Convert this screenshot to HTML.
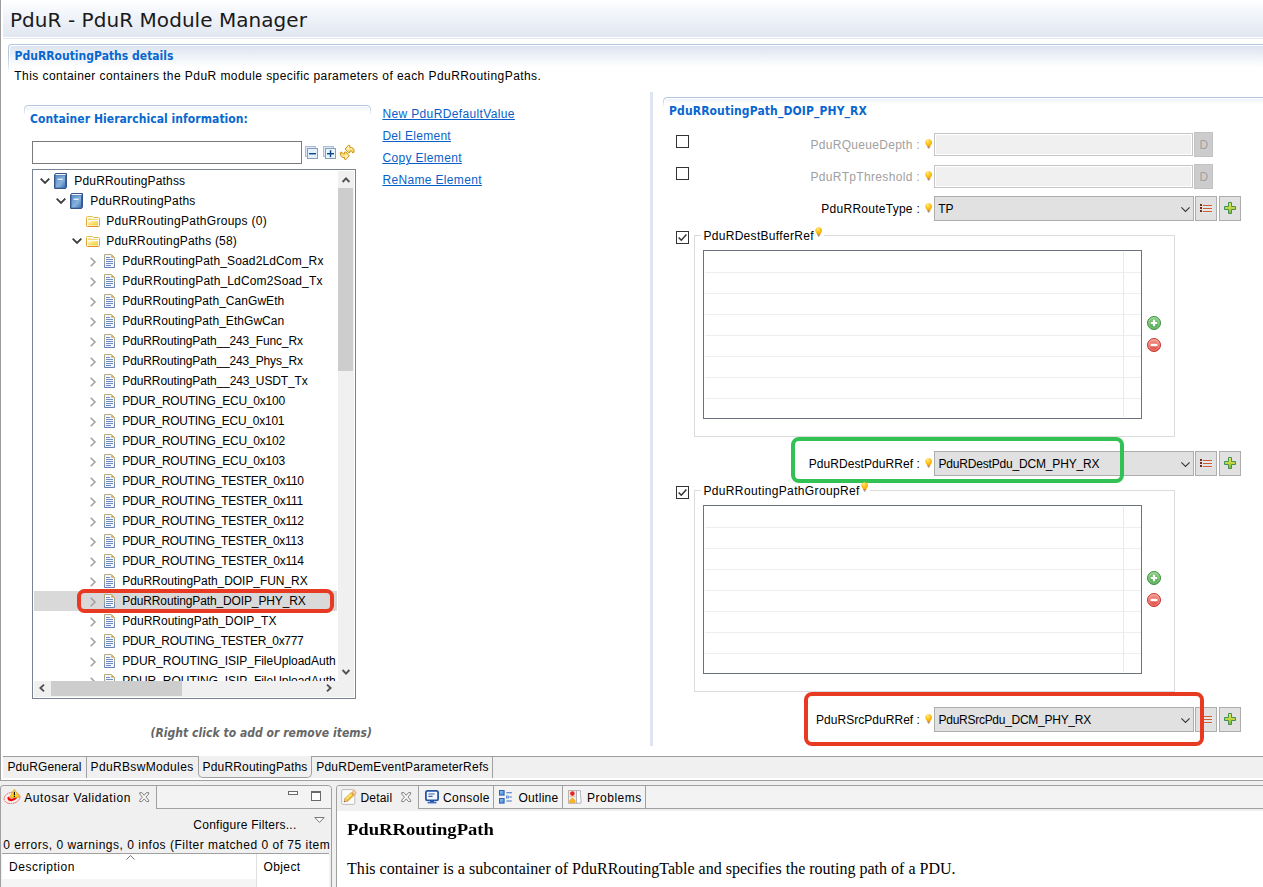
<!DOCTYPE html>
<html><head><meta charset="utf-8"><title>PduR - PduR Module Manager</title>
<style>

html,body{margin:0;padding:0;}
body{width:1263px;height:887px;position:relative;overflow:hidden;background:#fff;font-family:"Liberation Sans","DejaVu Sans",sans-serif;font-size:12px;color:#000;}
.t{position:absolute;white-space:nowrap;line-height:16px;height:16px;font-size:12px;}
.title{font-family:"DejaVu Sans","Liberation Sans",sans-serif;font-size:20px;line-height:26px;height:26px;color:#1a1a1a;}
.bh{font-weight:bold;color:#0867d0;font-family:"DejaVu Sans Condensed","DejaVu Sans","Liberation Sans",sans-serif;font-size:12px;}
.lnk{color:#0a5fc8;text-decoration:underline;}
.dis{color:#a0a0a0;}
.hint{font-family:"DejaVu Sans Condensed","DejaVu Sans","Liberation Sans",sans-serif;font-weight:bold;font-style:italic;color:#666666;font-size:12px;}
.serif{font-family:"Liberation Serif","DejaVu Serif",serif;}
svg{position:absolute;overflow:visible;}
.abs{position:absolute;}

</style></head>
<body>
<div class="" style="position:absolute;left:0px;top:0px;width:1px;height:781px;background:#9c9c9c;"></div>
<div class="" style="position:absolute;left:3px;top:0px;width:1260px;height:37px;background:linear-gradient(#ffffff 0%,#f4f7fb 30%,#e1e7f1 100%);"></div>
<div class="" style="position:absolute;left:3px;top:38px;width:1260px;height:1px;background:#e1e8f1;"></div>
<span id="t1" class="t title" style="left:10px;top:6.5px;letter-spacing:0.05px;">PduR - PduR Module Manager</span>
<div class="abs" style="left:8px;top:44px;width:1260px;height:30px;border:1px solid #b3c7de;border-bottom:none;border-right:none;border-radius:3px 0 0 0;box-sizing:border-box;-webkit-mask-image:linear-gradient(#000 0,#000 40%,transparent 100%);"></div>
<div class="" style="position:absolute;left:10px;top:46px;width:1253px;height:21px;background:linear-gradient(#dde4f0,#ffffff);border-radius:2px 0 0 0;"></div>
<span id="t2" class="t bh" style="left:14.5px;top:48px;letter-spacing:0.018px;">PduRRoutingPaths details</span>
<span id="t3" class="t " style="left:14.3px;top:67.8px;letter-spacing:0.438px;">This container containers the PduR module specific parameters of each PduRRoutingPaths.</span>
<div class="abs" style="left:24px;top:105px;width:347px;height:12px;border:1px solid #b3c7de;border-bottom:none;border-radius:4px 4px 0 0;box-sizing:border-box;-webkit-mask-image:linear-gradient(#000 0,#000 15%,transparent 85%);"></div>
<div class="" style="position:absolute;left:26px;top:107px;width:343px;height:5px;background:linear-gradient(#eef2f8,#ffffff);"></div>
<span id="t4" class="t bh" style="left:30px;top:111px;letter-spacing:0.062px;">Container Hierarchical information:</span>
<div class="" style="position:absolute;left:32px;top:141px;width:270px;height:23px;border:1px solid #7a7a7a;box-sizing:border-box;background:#fff;"></div>
<svg style="left:305px;top:145px" width="14" height="15" viewBox="0 0 14 15">
<rect x="0.5" y="1.5" width="10" height="10" fill="#dbe9f8" stroke="#a9bcd8"/>
<rect x="2.5" y="3.5" width="10" height="10" fill="#e4f1fc" stroke="#8c9db8"/>
<rect x="4" y="8" width="7" height="1.4" fill="#0b4a86"/>
</svg>
<svg style="left:323px;top:145px" width="14" height="15" viewBox="0 0 14 15">
<rect x="0.5" y="1.5" width="10" height="10" fill="#dbe9f8" stroke="#a9bcd8"/>
<rect x="2.5" y="3.5" width="10" height="10" fill="#e9f4fd" stroke="#8c9db8"/>
<rect x="4" y="8" width="7" height="1.4" fill="#0b4a86"/>
<rect x="6.8" y="5.2" width="1.4" height="7" fill="#0b4a86"/>
</svg>
<svg style="left:340px;top:144px" width="15" height="17" viewBox="0 0 15 17">
<defs><linearGradient id="sy" x1="0" y1="0" x2="0.4" y2="1"><stop offset="0" stop-color="#fffef4"/><stop offset="0.5" stop-color="#fdf0ac"/><stop offset="1" stop-color="#f6d45a"/></linearGradient></defs>
<path d="M5.2 5 L8.6 1.2 L9.9 1.6 L9.7 3.3 C12.4 3 14 4.6 14 6.6 L14 8.2 L12.6 8.8 C12.5 7.4 11.4 6.9 9.8 7 L9.9 8.6 L8.6 8.9 Z" fill="url(#sy)" stroke="#cf900f" stroke-width="1" stroke-linejoin="round"/>
<path d="M5.2 5 L8.6 1.2 L9.9 1.6 L9.7 3.3 C12.4 3 14 4.6 14 6.6 L14 8.2 L12.6 8.8 C12.5 7.4 11.4 6.9 9.8 7 L9.9 8.6 L8.6 8.9 Z" fill="url(#sy)" stroke="#cf900f" stroke-width="1" stroke-linejoin="round" transform="rotate(180 7.2 8.4)"/>
</svg>
<span id="t5" class="t lnk" style="left:382.4px;top:106px;letter-spacing:0.366px;">New PduRDefaultValue</span>
<span id="t6" class="t lnk" style="left:382.4px;top:128px;letter-spacing:0.293px;">Del Element</span>
<span id="t7" class="t lnk" style="left:382.4px;top:150px;letter-spacing:0.344px;">Copy Element</span>
<span id="t8" class="t lnk" style="left:382.4px;top:172px;letter-spacing:0.342px;">ReName Element</span>
<div class="" style="position:absolute;left:650px;top:92px;width:3px;height:654px;background:#dde5f0;"></div>
<span id="t9" class="t hint" style="left:150.5px;top:724.7px;letter-spacing:0.043px;">(Right click to add or remove items)</span>
<div class="" style="position:absolute;left:32px;top:169px;width:324px;height:530px;border:1px solid #7a8394;box-sizing:border-box;background:#fff;"></div>
<div class="abs" style="left:34px;top:171px;width:304px;height:510px;overflow:hidden;"><svg style="left:6px;top:7.3px" width="10" height="6" viewBox="0 0 10 6"><path d="M0.7 0.7 L5 5 L9.3 0.7" fill="none" stroke="#3c3c3c" stroke-width="1.8"/></svg>
<svg style="left:20px;top:2px" width="13" height="16" viewBox="0 0 13 16">
<defs><linearGradient id="bk" x1="0" y1="0" x2="1" y2="1"><stop offset="0" stop-color="#5c90cc"/><stop offset="0.6" stop-color="#86b3dc"/><stop offset="1" stop-color="#3f74b4"/></linearGradient></defs>
<path d="M1.5 0.5 H12.5 V14 L11.5 15.5 H1 Q0.5 15.5 0.5 15 V2 Z" fill="#3a62a0" stroke="#36558c" stroke-width="1"/>
<rect x="1.5" y="2.6" width="9.5" height="12" fill="url(#bk)"/>
<path d="M1.6 1.6 H11.6" stroke="#ffffff" stroke-width="1.1"/>
<rect x="3.6" y="5.6" width="5" height="1.4" fill="#e8f1fa"/>
</svg>
<span id="t10" class="t tr" style="left:40.3px;top:1.5px;letter-spacing:0.172px;">PduRRoutingPathss</span>
<svg style="left:22px;top:27.3px" width="10" height="6" viewBox="0 0 10 6"><path d="M0.7 0.7 L5 5 L9.3 0.7" fill="none" stroke="#3c3c3c" stroke-width="1.8"/></svg>
<svg style="left:36px;top:22px" width="13" height="16" viewBox="0 0 13 16">
<defs><linearGradient id="bk" x1="0" y1="0" x2="1" y2="1"><stop offset="0" stop-color="#5c90cc"/><stop offset="0.6" stop-color="#86b3dc"/><stop offset="1" stop-color="#3f74b4"/></linearGradient></defs>
<path d="M1.5 0.5 H12.5 V14 L11.5 15.5 H1 Q0.5 15.5 0.5 15 V2 Z" fill="#3a62a0" stroke="#36558c" stroke-width="1"/>
<rect x="1.5" y="2.6" width="9.5" height="12" fill="url(#bk)"/>
<path d="M1.6 1.6 H11.6" stroke="#ffffff" stroke-width="1.1"/>
<rect x="3.6" y="5.6" width="5" height="1.4" fill="#e8f1fa"/>
</svg>
<span id="t11" class="t tr" style="left:56.3px;top:21.5px;letter-spacing:0.198px;">PduRRoutingPaths</span>
<svg style="left:52px;top:45px" width="14" height="11" viewBox="0 0 14 11">
<defs><linearGradient id="fd" x1="0" y1="0" x2="1" y2="1"><stop offset="0" stop-color="#fff3b8"/><stop offset="0.5" stop-color="#f9e070"/><stop offset="1" stop-color="#f0c828"/></linearGradient>
<linearGradient id="fb" x1="0" y1="0" x2="0" y2="1"><stop offset="0" stop-color="#e2bc4c"/><stop offset="1" stop-color="#e08e30"/></linearGradient></defs>
<path d="M0.5 1.5 Q0.5 0.5 1.5 0.5 H6.5 L7.5 1.5 H12.5 Q13.5 1.5 13.5 2.5 V9.5 Q13.5 10.5 12.5 10.5 H1.5 Q0.5 10.5 0.5 9.5 Z" fill="#fffdf2" stroke="url(#fb)" stroke-width="1"/>
<path d="M2 5.8 L5 5.8 L6 5 H12 V9.6 H2 Z" fill="url(#fd)"/>
<path d="M2 2.4 H5 V4.2 H2 Z" fill="#f4d878"/>
<path d="M5 3.4 H12" stroke="#f0d070" stroke-width="1"/>
</svg>
<span id="t12" class="t tr" style="left:72.3px;top:41.5px;letter-spacing:0.293px;">PduRRoutingPathGroups (0)</span>
<svg style="left:38px;top:67.3px" width="10" height="6" viewBox="0 0 10 6"><path d="M0.7 0.7 L5 5 L9.3 0.7" fill="none" stroke="#3c3c3c" stroke-width="1.8"/></svg>
<svg style="left:52px;top:65px" width="14" height="11" viewBox="0 0 14 11">
<defs><linearGradient id="fd" x1="0" y1="0" x2="1" y2="1"><stop offset="0" stop-color="#fff3b8"/><stop offset="0.5" stop-color="#f9e070"/><stop offset="1" stop-color="#f0c828"/></linearGradient>
<linearGradient id="fb" x1="0" y1="0" x2="0" y2="1"><stop offset="0" stop-color="#e2bc4c"/><stop offset="1" stop-color="#e08e30"/></linearGradient></defs>
<path d="M0.5 1.5 Q0.5 0.5 1.5 0.5 H6.5 L7.5 1.5 H12.5 Q13.5 1.5 13.5 2.5 V9.5 Q13.5 10.5 12.5 10.5 H1.5 Q0.5 10.5 0.5 9.5 Z" fill="#fffdf2" stroke="url(#fb)" stroke-width="1"/>
<path d="M2 5.8 L5 5.8 L6 5 H12 V9.6 H2 Z" fill="url(#fd)"/>
<path d="M2 2.4 H5 V4.2 H2 Z" fill="#f4d878"/>
<path d="M5 3.4 H12" stroke="#f0d070" stroke-width="1"/>
</svg>
<span id="t13" class="t tr" style="left:72.3px;top:61.5px;letter-spacing:0.19px;">PduRRoutingPaths (58)</span>
<svg style="left:55.7px;top:85.6px" width="6" height="10" viewBox="0 0 6 10"><path d="M0.7 0.7 L5 5 L0.7 9.3" fill="none" stroke="#a3a3a3" stroke-width="1.6"/></svg>
<svg style="left:70px;top:83px" width="11" height="14" viewBox="0 0 11 14">
<defs><linearGradient id="dc" x1="0" y1="0" x2="0" y2="1"><stop offset="0" stop-color="#b9aa72"/><stop offset="0.45" stop-color="#a3a592"/><stop offset="1" stop-color="#6580b8"/></linearGradient></defs>
<path d="M0.5 0.5 H7.5 L10.5 3.5 V13.5 H0.5 Z" fill="#f2f6fd" stroke="url(#dc)" stroke-width="1"/>
<path d="M7.2 0.8 L10.2 3.8 H7.2 Z" fill="#dca544"/>
<path d="M2 3.5 H6 M2 5.5 H9 M2 7.5 H9 M2 9.5 H9 M2 11.5 H7" stroke="#6f8cc2" stroke-width="1"/>
</svg>
<span id="t14" class="t tr" style="left:88.3px;top:81.5px;letter-spacing:0.13px;">PduRRoutingPath_Soad2LdCom_Rx</span>
<svg style="left:55.7px;top:105.6px" width="6" height="10" viewBox="0 0 6 10"><path d="M0.7 0.7 L5 5 L0.7 9.3" fill="none" stroke="#a3a3a3" stroke-width="1.6"/></svg>
<svg style="left:70px;top:103px" width="11" height="14" viewBox="0 0 11 14">
<defs><linearGradient id="dc" x1="0" y1="0" x2="0" y2="1"><stop offset="0" stop-color="#b9aa72"/><stop offset="0.45" stop-color="#a3a592"/><stop offset="1" stop-color="#6580b8"/></linearGradient></defs>
<path d="M0.5 0.5 H7.5 L10.5 3.5 V13.5 H0.5 Z" fill="#f2f6fd" stroke="url(#dc)" stroke-width="1"/>
<path d="M7.2 0.8 L10.2 3.8 H7.2 Z" fill="#dca544"/>
<path d="M2 3.5 H6 M2 5.5 H9 M2 7.5 H9 M2 9.5 H9 M2 11.5 H7" stroke="#6f8cc2" stroke-width="1"/>
</svg>
<span id="t15" class="t tr" style="left:88.3px;top:101.5px;letter-spacing:0.142px;">PduRRoutingPath_LdCom2Soad_Tx</span>
<svg style="left:55.7px;top:125.6px" width="6" height="10" viewBox="0 0 6 10"><path d="M0.7 0.7 L5 5 L0.7 9.3" fill="none" stroke="#a3a3a3" stroke-width="1.6"/></svg>
<svg style="left:70px;top:123px" width="11" height="14" viewBox="0 0 11 14">
<defs><linearGradient id="dc" x1="0" y1="0" x2="0" y2="1"><stop offset="0" stop-color="#b9aa72"/><stop offset="0.45" stop-color="#a3a592"/><stop offset="1" stop-color="#6580b8"/></linearGradient></defs>
<path d="M0.5 0.5 H7.5 L10.5 3.5 V13.5 H0.5 Z" fill="#f2f6fd" stroke="url(#dc)" stroke-width="1"/>
<path d="M7.2 0.8 L10.2 3.8 H7.2 Z" fill="#dca544"/>
<path d="M2 3.5 H6 M2 5.5 H9 M2 7.5 H9 M2 9.5 H9 M2 11.5 H7" stroke="#6f8cc2" stroke-width="1"/>
</svg>
<span id="t16" class="t tr" style="left:88.3px;top:121.5px;letter-spacing:0.051px;">PduRRoutingPath_CanGwEth</span>
<svg style="left:55.7px;top:145.6px" width="6" height="10" viewBox="0 0 6 10"><path d="M0.7 0.7 L5 5 L0.7 9.3" fill="none" stroke="#a3a3a3" stroke-width="1.6"/></svg>
<svg style="left:70px;top:143px" width="11" height="14" viewBox="0 0 11 14">
<defs><linearGradient id="dc" x1="0" y1="0" x2="0" y2="1"><stop offset="0" stop-color="#b9aa72"/><stop offset="0.45" stop-color="#a3a592"/><stop offset="1" stop-color="#6580b8"/></linearGradient></defs>
<path d="M0.5 0.5 H7.5 L10.5 3.5 V13.5 H0.5 Z" fill="#f2f6fd" stroke="url(#dc)" stroke-width="1"/>
<path d="M7.2 0.8 L10.2 3.8 H7.2 Z" fill="#dca544"/>
<path d="M2 3.5 H6 M2 5.5 H9 M2 7.5 H9 M2 9.5 H9 M2 11.5 H7" stroke="#6f8cc2" stroke-width="1"/>
</svg>
<span id="t17" class="t tr" style="left:88.3px;top:141.5px;letter-spacing:0.051px;">PduRRoutingPath_EthGwCan</span>
<svg style="left:55.7px;top:165.6px" width="6" height="10" viewBox="0 0 6 10"><path d="M0.7 0.7 L5 5 L0.7 9.3" fill="none" stroke="#a3a3a3" stroke-width="1.6"/></svg>
<svg style="left:70px;top:163px" width="11" height="14" viewBox="0 0 11 14">
<defs><linearGradient id="dc" x1="0" y1="0" x2="0" y2="1"><stop offset="0" stop-color="#b9aa72"/><stop offset="0.45" stop-color="#a3a592"/><stop offset="1" stop-color="#6580b8"/></linearGradient></defs>
<path d="M0.5 0.5 H7.5 L10.5 3.5 V13.5 H0.5 Z" fill="#f2f6fd" stroke="url(#dc)" stroke-width="1"/>
<path d="M7.2 0.8 L10.2 3.8 H7.2 Z" fill="#dca544"/>
<path d="M2 3.5 H6 M2 5.5 H9 M2 7.5 H9 M2 9.5 H9 M2 11.5 H7" stroke="#6f8cc2" stroke-width="1"/>
</svg>
<span id="t18" class="t tr" style="left:88.3px;top:161.5px;letter-spacing:-0.129px;">PduRRoutingPath__243_Func_Rx</span>
<svg style="left:55.7px;top:185.6px" width="6" height="10" viewBox="0 0 6 10"><path d="M0.7 0.7 L5 5 L0.7 9.3" fill="none" stroke="#a3a3a3" stroke-width="1.6"/></svg>
<svg style="left:70px;top:183px" width="11" height="14" viewBox="0 0 11 14">
<defs><linearGradient id="dc" x1="0" y1="0" x2="0" y2="1"><stop offset="0" stop-color="#b9aa72"/><stop offset="0.45" stop-color="#a3a592"/><stop offset="1" stop-color="#6580b8"/></linearGradient></defs>
<path d="M0.5 0.5 H7.5 L10.5 3.5 V13.5 H0.5 Z" fill="#f2f6fd" stroke="url(#dc)" stroke-width="1"/>
<path d="M7.2 0.8 L10.2 3.8 H7.2 Z" fill="#dca544"/>
<path d="M2 3.5 H6 M2 5.5 H9 M2 7.5 H9 M2 9.5 H9 M2 11.5 H7" stroke="#6f8cc2" stroke-width="1"/>
</svg>
<span id="t19" class="t tr" style="left:88.3px;top:181.5px;letter-spacing:-0.129px;">PduRRoutingPath__243_Phys_Rx</span>
<svg style="left:55.7px;top:205.6px" width="6" height="10" viewBox="0 0 6 10"><path d="M0.7 0.7 L5 5 L0.7 9.3" fill="none" stroke="#a3a3a3" stroke-width="1.6"/></svg>
<svg style="left:70px;top:203px" width="11" height="14" viewBox="0 0 11 14">
<defs><linearGradient id="dc" x1="0" y1="0" x2="0" y2="1"><stop offset="0" stop-color="#b9aa72"/><stop offset="0.45" stop-color="#a3a592"/><stop offset="1" stop-color="#6580b8"/></linearGradient></defs>
<path d="M0.5 0.5 H7.5 L10.5 3.5 V13.5 H0.5 Z" fill="#f2f6fd" stroke="url(#dc)" stroke-width="1"/>
<path d="M7.2 0.8 L10.2 3.8 H7.2 Z" fill="#dca544"/>
<path d="M2 3.5 H6 M2 5.5 H9 M2 7.5 H9 M2 9.5 H9 M2 11.5 H7" stroke="#6f8cc2" stroke-width="1"/>
</svg>
<span id="t20" class="t tr" style="left:88.3px;top:201.5px;letter-spacing:-0.121px;">PduRRoutingPath__243_USDT_Tx</span>
<svg style="left:55.7px;top:225.6px" width="6" height="10" viewBox="0 0 6 10"><path d="M0.7 0.7 L5 5 L0.7 9.3" fill="none" stroke="#a3a3a3" stroke-width="1.6"/></svg>
<svg style="left:70px;top:223px" width="11" height="14" viewBox="0 0 11 14">
<defs><linearGradient id="dc" x1="0" y1="0" x2="0" y2="1"><stop offset="0" stop-color="#b9aa72"/><stop offset="0.45" stop-color="#a3a592"/><stop offset="1" stop-color="#6580b8"/></linearGradient></defs>
<path d="M0.5 0.5 H7.5 L10.5 3.5 V13.5 H0.5 Z" fill="#f2f6fd" stroke="url(#dc)" stroke-width="1"/>
<path d="M7.2 0.8 L10.2 3.8 H7.2 Z" fill="#dca544"/>
<path d="M2 3.5 H6 M2 5.5 H9 M2 7.5 H9 M2 9.5 H9 M2 11.5 H7" stroke="#6f8cc2" stroke-width="1"/>
</svg>
<span id="t21" class="t tr" style="left:88.3px;top:221.5px;letter-spacing:-0.218px;">PDUR_ROUTING_ECU_0x100</span>
<svg style="left:55.7px;top:245.6px" width="6" height="10" viewBox="0 0 6 10"><path d="M0.7 0.7 L5 5 L0.7 9.3" fill="none" stroke="#a3a3a3" stroke-width="1.6"/></svg>
<svg style="left:70px;top:243px" width="11" height="14" viewBox="0 0 11 14">
<defs><linearGradient id="dc" x1="0" y1="0" x2="0" y2="1"><stop offset="0" stop-color="#b9aa72"/><stop offset="0.45" stop-color="#a3a592"/><stop offset="1" stop-color="#6580b8"/></linearGradient></defs>
<path d="M0.5 0.5 H7.5 L10.5 3.5 V13.5 H0.5 Z" fill="#f2f6fd" stroke="url(#dc)" stroke-width="1"/>
<path d="M7.2 0.8 L10.2 3.8 H7.2 Z" fill="#dca544"/>
<path d="M2 3.5 H6 M2 5.5 H9 M2 7.5 H9 M2 9.5 H9 M2 11.5 H7" stroke="#6f8cc2" stroke-width="1"/>
</svg>
<span id="t22" class="t tr" style="left:88.3px;top:241.5px;letter-spacing:-0.245px;">PDUR_ROUTING_ECU_0x101</span>
<svg style="left:55.7px;top:265.6px" width="6" height="10" viewBox="0 0 6 10"><path d="M0.7 0.7 L5 5 L0.7 9.3" fill="none" stroke="#a3a3a3" stroke-width="1.6"/></svg>
<svg style="left:70px;top:263px" width="11" height="14" viewBox="0 0 11 14">
<defs><linearGradient id="dc" x1="0" y1="0" x2="0" y2="1"><stop offset="0" stop-color="#b9aa72"/><stop offset="0.45" stop-color="#a3a592"/><stop offset="1" stop-color="#6580b8"/></linearGradient></defs>
<path d="M0.5 0.5 H7.5 L10.5 3.5 V13.5 H0.5 Z" fill="#f2f6fd" stroke="url(#dc)" stroke-width="1"/>
<path d="M7.2 0.8 L10.2 3.8 H7.2 Z" fill="#dca544"/>
<path d="M2 3.5 H6 M2 5.5 H9 M2 7.5 H9 M2 9.5 H9 M2 11.5 H7" stroke="#6f8cc2" stroke-width="1"/>
</svg>
<span id="t23" class="t tr" style="left:88.3px;top:261.5px;letter-spacing:-0.218px;">PDUR_ROUTING_ECU_0x102</span>
<svg style="left:55.7px;top:285.6px" width="6" height="10" viewBox="0 0 6 10"><path d="M0.7 0.7 L5 5 L0.7 9.3" fill="none" stroke="#a3a3a3" stroke-width="1.6"/></svg>
<svg style="left:70px;top:283px" width="11" height="14" viewBox="0 0 11 14">
<defs><linearGradient id="dc" x1="0" y1="0" x2="0" y2="1"><stop offset="0" stop-color="#b9aa72"/><stop offset="0.45" stop-color="#a3a592"/><stop offset="1" stop-color="#6580b8"/></linearGradient></defs>
<path d="M0.5 0.5 H7.5 L10.5 3.5 V13.5 H0.5 Z" fill="#f2f6fd" stroke="url(#dc)" stroke-width="1"/>
<path d="M7.2 0.8 L10.2 3.8 H7.2 Z" fill="#dca544"/>
<path d="M2 3.5 H6 M2 5.5 H9 M2 7.5 H9 M2 9.5 H9 M2 11.5 H7" stroke="#6f8cc2" stroke-width="1"/>
</svg>
<span id="t24" class="t tr" style="left:88.3px;top:281.5px;letter-spacing:-0.218px;">PDUR_ROUTING_ECU_0x103</span>
<svg style="left:55.7px;top:305.6px" width="6" height="10" viewBox="0 0 6 10"><path d="M0.7 0.7 L5 5 L0.7 9.3" fill="none" stroke="#a3a3a3" stroke-width="1.6"/></svg>
<svg style="left:70px;top:303px" width="11" height="14" viewBox="0 0 11 14">
<defs><linearGradient id="dc" x1="0" y1="0" x2="0" y2="1"><stop offset="0" stop-color="#b9aa72"/><stop offset="0.45" stop-color="#a3a592"/><stop offset="1" stop-color="#6580b8"/></linearGradient></defs>
<path d="M0.5 0.5 H7.5 L10.5 3.5 V13.5 H0.5 Z" fill="#f2f6fd" stroke="url(#dc)" stroke-width="1"/>
<path d="M7.2 0.8 L10.2 3.8 H7.2 Z" fill="#dca544"/>
<path d="M2 3.5 H6 M2 5.5 H9 M2 7.5 H9 M2 9.5 H9 M2 11.5 H7" stroke="#6f8cc2" stroke-width="1"/>
</svg>
<span id="t25" class="t tr" style="left:88.3px;top:301.5px;letter-spacing:-0.284px;">PDUR_ROUTING_TESTER_0x110</span>
<svg style="left:55.7px;top:325.6px" width="6" height="10" viewBox="0 0 6 10"><path d="M0.7 0.7 L5 5 L0.7 9.3" fill="none" stroke="#a3a3a3" stroke-width="1.6"/></svg>
<svg style="left:70px;top:323px" width="11" height="14" viewBox="0 0 11 14">
<defs><linearGradient id="dc" x1="0" y1="0" x2="0" y2="1"><stop offset="0" stop-color="#b9aa72"/><stop offset="0.45" stop-color="#a3a592"/><stop offset="1" stop-color="#6580b8"/></linearGradient></defs>
<path d="M0.5 0.5 H7.5 L10.5 3.5 V13.5 H0.5 Z" fill="#f2f6fd" stroke="url(#dc)" stroke-width="1"/>
<path d="M7.2 0.8 L10.2 3.8 H7.2 Z" fill="#dca544"/>
<path d="M2 3.5 H6 M2 5.5 H9 M2 7.5 H9 M2 9.5 H9 M2 11.5 H7" stroke="#6f8cc2" stroke-width="1"/>
</svg>
<span id="t26" class="t tr" style="left:88.3px;top:321.5px;letter-spacing:-0.284px;">PDUR_ROUTING_TESTER_0x111</span>
<svg style="left:55.7px;top:345.6px" width="6" height="10" viewBox="0 0 6 10"><path d="M0.7 0.7 L5 5 L0.7 9.3" fill="none" stroke="#a3a3a3" stroke-width="1.6"/></svg>
<svg style="left:70px;top:343px" width="11" height="14" viewBox="0 0 11 14">
<defs><linearGradient id="dc" x1="0" y1="0" x2="0" y2="1"><stop offset="0" stop-color="#b9aa72"/><stop offset="0.45" stop-color="#a3a592"/><stop offset="1" stop-color="#6580b8"/></linearGradient></defs>
<path d="M0.5 0.5 H7.5 L10.5 3.5 V13.5 H0.5 Z" fill="#f2f6fd" stroke="url(#dc)" stroke-width="1"/>
<path d="M7.2 0.8 L10.2 3.8 H7.2 Z" fill="#dca544"/>
<path d="M2 3.5 H6 M2 5.5 H9 M2 7.5 H9 M2 9.5 H9 M2 11.5 H7" stroke="#6f8cc2" stroke-width="1"/>
</svg>
<span id="t27" class="t tr" style="left:88.3px;top:341.5px;letter-spacing:-0.284px;">PDUR_ROUTING_TESTER_0x112</span>
<svg style="left:55.7px;top:365.6px" width="6" height="10" viewBox="0 0 6 10"><path d="M0.7 0.7 L5 5 L0.7 9.3" fill="none" stroke="#a3a3a3" stroke-width="1.6"/></svg>
<svg style="left:70px;top:363px" width="11" height="14" viewBox="0 0 11 14">
<defs><linearGradient id="dc" x1="0" y1="0" x2="0" y2="1"><stop offset="0" stop-color="#b9aa72"/><stop offset="0.45" stop-color="#a3a592"/><stop offset="1" stop-color="#6580b8"/></linearGradient></defs>
<path d="M0.5 0.5 H7.5 L10.5 3.5 V13.5 H0.5 Z" fill="#f2f6fd" stroke="url(#dc)" stroke-width="1"/>
<path d="M7.2 0.8 L10.2 3.8 H7.2 Z" fill="#dca544"/>
<path d="M2 3.5 H6 M2 5.5 H9 M2 7.5 H9 M2 9.5 H9 M2 11.5 H7" stroke="#6f8cc2" stroke-width="1"/>
</svg>
<span id="t28" class="t tr" style="left:88.3px;top:361.5px;letter-spacing:-0.3px;">PDUR_ROUTING_TESTER_0x113</span>
<svg style="left:55.7px;top:385.6px" width="6" height="10" viewBox="0 0 6 10"><path d="M0.7 0.7 L5 5 L0.7 9.3" fill="none" stroke="#a3a3a3" stroke-width="1.6"/></svg>
<svg style="left:70px;top:383px" width="11" height="14" viewBox="0 0 11 14">
<defs><linearGradient id="dc" x1="0" y1="0" x2="0" y2="1"><stop offset="0" stop-color="#b9aa72"/><stop offset="0.45" stop-color="#a3a592"/><stop offset="1" stop-color="#6580b8"/></linearGradient></defs>
<path d="M0.5 0.5 H7.5 L10.5 3.5 V13.5 H0.5 Z" fill="#f2f6fd" stroke="url(#dc)" stroke-width="1"/>
<path d="M7.2 0.8 L10.2 3.8 H7.2 Z" fill="#dca544"/>
<path d="M2 3.5 H6 M2 5.5 H9 M2 7.5 H9 M2 9.5 H9 M2 11.5 H7" stroke="#6f8cc2" stroke-width="1"/>
</svg>
<span id="t29" class="t tr" style="left:88.3px;top:381.5px;letter-spacing:-0.284px;">PDUR_ROUTING_TESTER_0x114</span>
<svg style="left:55.7px;top:405.6px" width="6" height="10" viewBox="0 0 6 10"><path d="M0.7 0.7 L5 5 L0.7 9.3" fill="none" stroke="#a3a3a3" stroke-width="1.6"/></svg>
<svg style="left:70px;top:403px" width="11" height="14" viewBox="0 0 11 14">
<defs><linearGradient id="dc" x1="0" y1="0" x2="0" y2="1"><stop offset="0" stop-color="#b9aa72"/><stop offset="0.45" stop-color="#a3a592"/><stop offset="1" stop-color="#6580b8"/></linearGradient></defs>
<path d="M0.5 0.5 H7.5 L10.5 3.5 V13.5 H0.5 Z" fill="#f2f6fd" stroke="url(#dc)" stroke-width="1"/>
<path d="M7.2 0.8 L10.2 3.8 H7.2 Z" fill="#dca544"/>
<path d="M2 3.5 H6 M2 5.5 H9 M2 7.5 H9 M2 9.5 H9 M2 11.5 H7" stroke="#6f8cc2" stroke-width="1"/>
</svg>
<span id="t30" class="t tr" style="left:88.3px;top:401.5px;letter-spacing:-0.051px;">PduRRoutingPath_DOIP_FUN_RX</span>
<div class="" style="position:absolute;left:0px;top:420px;width:303px;height:20px;background:#d9d9d9;"></div>
<svg style="left:55.7px;top:425.6px" width="6" height="10" viewBox="0 0 6 10"><path d="M0.7 0.7 L5 5 L0.7 9.3" fill="none" stroke="#a3a3a3" stroke-width="1.6"/></svg>
<svg style="left:70px;top:423px" width="11" height="14" viewBox="0 0 11 14">
<defs><linearGradient id="dc" x1="0" y1="0" x2="0" y2="1"><stop offset="0" stop-color="#b9aa72"/><stop offset="0.45" stop-color="#a3a592"/><stop offset="1" stop-color="#6580b8"/></linearGradient></defs>
<path d="M0.5 0.5 H7.5 L10.5 3.5 V13.5 H0.5 Z" fill="#f2f6fd" stroke="url(#dc)" stroke-width="1"/>
<path d="M7.2 0.8 L10.2 3.8 H7.2 Z" fill="#dca544"/>
<path d="M2 3.5 H6 M2 5.5 H9 M2 7.5 H9 M2 9.5 H9 M2 11.5 H7" stroke="#6f8cc2" stroke-width="1"/>
</svg>
<span id="t31" class="t tr" style="left:88.3px;top:421.5px;letter-spacing:-0.125px;">PduRRoutingPath_DOIP_PHY_RX</span>
<svg style="left:55.7px;top:445.6px" width="6" height="10" viewBox="0 0 6 10"><path d="M0.7 0.7 L5 5 L0.7 9.3" fill="none" stroke="#a3a3a3" stroke-width="1.6"/></svg>
<svg style="left:70px;top:443px" width="11" height="14" viewBox="0 0 11 14">
<defs><linearGradient id="dc" x1="0" y1="0" x2="0" y2="1"><stop offset="0" stop-color="#b9aa72"/><stop offset="0.45" stop-color="#a3a592"/><stop offset="1" stop-color="#6580b8"/></linearGradient></defs>
<path d="M0.5 0.5 H7.5 L10.5 3.5 V13.5 H0.5 Z" fill="#f2f6fd" stroke="url(#dc)" stroke-width="1"/>
<path d="M7.2 0.8 L10.2 3.8 H7.2 Z" fill="#dca544"/>
<path d="M2 3.5 H6 M2 5.5 H9 M2 7.5 H9 M2 9.5 H9 M2 11.5 H7" stroke="#6f8cc2" stroke-width="1"/>
</svg>
<span id="t32" class="t tr" style="left:88.3px;top:441.5px;letter-spacing:0.0px;">PduRRoutingPath_DOIP_TX</span>
<svg style="left:55.7px;top:465.6px" width="6" height="10" viewBox="0 0 6 10"><path d="M0.7 0.7 L5 5 L0.7 9.3" fill="none" stroke="#a3a3a3" stroke-width="1.6"/></svg>
<svg style="left:70px;top:463px" width="11" height="14" viewBox="0 0 11 14">
<defs><linearGradient id="dc" x1="0" y1="0" x2="0" y2="1"><stop offset="0" stop-color="#b9aa72"/><stop offset="0.45" stop-color="#a3a592"/><stop offset="1" stop-color="#6580b8"/></linearGradient></defs>
<path d="M0.5 0.5 H7.5 L10.5 3.5 V13.5 H0.5 Z" fill="#f2f6fd" stroke="url(#dc)" stroke-width="1"/>
<path d="M7.2 0.8 L10.2 3.8 H7.2 Z" fill="#dca544"/>
<path d="M2 3.5 H6 M2 5.5 H9 M2 7.5 H9 M2 9.5 H9 M2 11.5 H7" stroke="#6f8cc2" stroke-width="1"/>
</svg>
<span id="t33" class="t tr" style="left:88.3px;top:461.5px;letter-spacing:-0.332px;">PDUR_ROUTING_TESTER_0x777</span>
<svg style="left:55.7px;top:485.6px" width="6" height="10" viewBox="0 0 6 10"><path d="M0.7 0.7 L5 5 L0.7 9.3" fill="none" stroke="#a3a3a3" stroke-width="1.6"/></svg>
<svg style="left:70px;top:483px" width="11" height="14" viewBox="0 0 11 14">
<defs><linearGradient id="dc" x1="0" y1="0" x2="0" y2="1"><stop offset="0" stop-color="#b9aa72"/><stop offset="0.45" stop-color="#a3a592"/><stop offset="1" stop-color="#6580b8"/></linearGradient></defs>
<path d="M0.5 0.5 H7.5 L10.5 3.5 V13.5 H0.5 Z" fill="#f2f6fd" stroke="url(#dc)" stroke-width="1"/>
<path d="M7.2 0.8 L10.2 3.8 H7.2 Z" fill="#dca544"/>
<path d="M2 3.5 H6 M2 5.5 H9 M2 7.5 H9 M2 9.5 H9 M2 11.5 H7" stroke="#6f8cc2" stroke-width="1"/>
</svg>
<span id="t34" class="t tr" style="left:88.3px;top:481.5px;letter-spacing:-0.024px;">PDUR_ROUTING_ISIP_FileUploadAuth</span>
<svg style="left:55.7px;top:505.6px" width="6" height="10" viewBox="0 0 6 10"><path d="M0.7 0.7 L5 5 L0.7 9.3" fill="none" stroke="#a3a3a3" stroke-width="1.6"/></svg>
<svg style="left:70px;top:503px" width="11" height="14" viewBox="0 0 11 14">
<defs><linearGradient id="dc" x1="0" y1="0" x2="0" y2="1"><stop offset="0" stop-color="#b9aa72"/><stop offset="0.45" stop-color="#a3a592"/><stop offset="1" stop-color="#6580b8"/></linearGradient></defs>
<path d="M0.5 0.5 H7.5 L10.5 3.5 V13.5 H0.5 Z" fill="#f2f6fd" stroke="url(#dc)" stroke-width="1"/>
<path d="M7.2 0.8 L10.2 3.8 H7.2 Z" fill="#dca544"/>
<path d="M2 3.5 H6 M2 5.5 H9 M2 7.5 H9 M2 9.5 H9 M2 11.5 H7" stroke="#6f8cc2" stroke-width="1"/>
</svg>
<span id="t35" class="t tr" style="left:88.3px;top:501.5px;letter-spacing:-0.024px;">PDUR_ROUTING_ISIP_FileUploadAuth</span></div>
<div class="abs" style="left:76.7px;top:588.8px;width:257.3px;height:24.2px;border:4px solid #e83a22;border-radius:7.5px;box-sizing:border-box;"></div>
<div class="" style="position:absolute;left:338px;top:171px;width:16px;height:510px;background:#f0f0f0;"></div>
<div class="" style="position:absolute;left:338px;top:188px;width:15px;height:183px;background:#cdcdcd;"></div>
<svg style="left:341.5px;top:176.5px" width="8" height="6" viewBox="0 0 8 6"><path d="M0.6 5 L4 1.4 L7.4 5" fill="none" stroke="#505050" stroke-width="1.9"/></svg>
<svg style="left:341.5px;top:669px" width="8" height="6" viewBox="0 0 8 6"><path d="M0.6 1 L4 4.6 L7.4 1" fill="none" stroke="#505050" stroke-width="1.9"/></svg>
<div class="" style="position:absolute;left:34px;top:681px;width:320px;height:16px;background:#f0f0f0;"></div>
<div class="" style="position:absolute;left:51px;top:681px;width:131px;height:15px;background:#cdcdcd;"></div>
<svg style="left:39px;top:684.2px" width="6" height="8" viewBox="0 0 6 8"><path d="M5 0.6 L1.4 4 L5 7.4" fill="none" stroke="#505050" stroke-width="1.9"/></svg>
<svg style="left:326px;top:684.2px" width="6" height="8" viewBox="0 0 6 8"><path d="M1 0.6 L4.6 4 L1 7.4" fill="none" stroke="#505050" stroke-width="1.9"/></svg>
<div class="abs" style="left:663px;top:97px;width:620px;height:12px;border:1px solid #b3c7de;border-bottom:none;border-right:none;border-radius:4px 0 0 0;box-sizing:border-box;-webkit-mask-image:linear-gradient(#000 0,#000 15%,transparent 85%);"></div>
<div class="" style="position:absolute;left:665px;top:99px;width:600px;height:5px;background:linear-gradient(#eef2f8,#ffffff);"></div>
<span id="t36" class="t bh" style="left:669px;top:103px;letter-spacing:0.122px;">PduRRoutingPath_DOIP_PHY_RX</span>
<div class="abs" style="left:676px;top:135px;width:13px;height:13px;border:1px solid #333;box-sizing:border-box;background:#fff;"></div>
<span id="t37" class="t dis" style="right:343px;top:137.3px;letter-spacing:0.297px;">PduRQueueDepth :</span>
<svg style="left:925px;top:139px" width="7.4" height="10.2" viewBox="0 0 8 11">
<defs><radialGradient id="bl" cx="0.4" cy="0.35" r="0.7"><stop offset="0" stop-color="#ffe27a"/><stop offset="0.5" stop-color="#fdc517"/><stop offset="1" stop-color="#f7a80a"/></radialGradient></defs>
<path d="M4 0.2 C6.2 0.2 7.7 1.8 7.7 3.7 C7.7 5.4 6.3 6.2 5.9 7.6 H2.1 C1.7 6.2 0.3 5.4 0.3 3.7 C0.3 1.8 1.8 0.2 4 0.2 Z" fill="url(#bl)"/>
<path d="M2.3 7.6 H5.7 V8.8 H2.3 Z" fill="#d98a1e"/>
<path d="M2.8 8.8 H5.2 L4.6 10.2 H3.4 Z" fill="#8a7a6a"/>
<path d="M2.3 2.3 L3.4 1.4" stroke="#fff6c8" stroke-width="0.9" stroke-linecap="round"/>
</svg>
<div class="" style="position:absolute;left:934px;top:133px;width:259px;height:23px;border:1px solid #c4c4c4;box-sizing:border-box;background:#f0f0f0;box-shadow:inset 0 0 0 1px #fff;"></div>
<div class="" style="position:absolute;left:1194px;top:132px;width:19px;height:25px;border:1px solid #c3c3c3;box-sizing:border-box;background:#cccccc;"></div>
<span id="t38" class="t " style="left:1199.6px;top:136.8px;color:#a2a2a2;font-size:12px;">D</span>
<div class="abs" style="left:676px;top:167px;width:13px;height:13px;border:1px solid #333;box-sizing:border-box;background:#fff;"></div>
<span id="t39" class="t dis" style="right:343px;top:169.3px;letter-spacing:0.333px;">PduRTpThreshold :</span>
<svg style="left:925px;top:171px" width="7.4" height="10.2" viewBox="0 0 8 11">
<defs><radialGradient id="bl" cx="0.4" cy="0.35" r="0.7"><stop offset="0" stop-color="#ffe27a"/><stop offset="0.5" stop-color="#fdc517"/><stop offset="1" stop-color="#f7a80a"/></radialGradient></defs>
<path d="M4 0.2 C6.2 0.2 7.7 1.8 7.7 3.7 C7.7 5.4 6.3 6.2 5.9 7.6 H2.1 C1.7 6.2 0.3 5.4 0.3 3.7 C0.3 1.8 1.8 0.2 4 0.2 Z" fill="url(#bl)"/>
<path d="M2.3 7.6 H5.7 V8.8 H2.3 Z" fill="#d98a1e"/>
<path d="M2.8 8.8 H5.2 L4.6 10.2 H3.4 Z" fill="#8a7a6a"/>
<path d="M2.3 2.3 L3.4 1.4" stroke="#fff6c8" stroke-width="0.9" stroke-linecap="round"/>
</svg>
<div class="" style="position:absolute;left:934px;top:165px;width:259px;height:23px;border:1px solid #c4c4c4;box-sizing:border-box;background:#f0f0f0;box-shadow:inset 0 0 0 1px #fff;"></div>
<div class="" style="position:absolute;left:1194px;top:164px;width:19px;height:25px;border:1px solid #c3c3c3;box-sizing:border-box;background:#cccccc;"></div>
<span id="t40" class="t " style="left:1199.6px;top:168.8px;color:#a2a2a2;font-size:12px;">D</span>
<span id="t41" class="t " style="right:343px;top:201px;letter-spacing:0.264px;">PduRRouteType :</span>
<svg style="left:925px;top:203px" width="7.4" height="10.2" viewBox="0 0 8 11">
<defs><radialGradient id="bl" cx="0.4" cy="0.35" r="0.7"><stop offset="0" stop-color="#ffe27a"/><stop offset="0.5" stop-color="#fdc517"/><stop offset="1" stop-color="#f7a80a"/></radialGradient></defs>
<path d="M4 0.2 C6.2 0.2 7.7 1.8 7.7 3.7 C7.7 5.4 6.3 6.2 5.9 7.6 H2.1 C1.7 6.2 0.3 5.4 0.3 3.7 C0.3 1.8 1.8 0.2 4 0.2 Z" fill="url(#bl)"/>
<path d="M2.3 7.6 H5.7 V8.8 H2.3 Z" fill="#d98a1e"/>
<path d="M2.8 8.8 H5.2 L4.6 10.2 H3.4 Z" fill="#8a7a6a"/>
<path d="M2.3 2.3 L3.4 1.4" stroke="#fff6c8" stroke-width="0.9" stroke-linecap="round"/>
</svg>
<div class="" style="position:absolute;left:934px;top:196px;width:260px;height:25px;border:1px solid #adadad;box-sizing:border-box;background:#e1e1e1;"></div><svg style="left:1180.5px;top:206.6px" width="9" height="5" viewBox="0 0 9 5"><path d="M0.4 0.4 L4.5 4.4 L8.6 0.4" fill="none" stroke="#3a3a3a" stroke-width="1.15"/></svg>
<span id="t42" class="t " style="left:938.2px;top:201px;">TP</span>
<div class="" style="position:absolute;left:1195px;top:196px;width:22px;height:25px;border:1px solid #adadad;box-sizing:border-box;background:#e1e1e1;"></div><svg style="left:1200px;top:204px" width="13" height="9" viewBox="0 0 13 9" shape-rendering="crispEdges">
<rect x="2.5" y="0.5" width="10" height="8" fill="#e8eeee" opacity="0.6"/>
<rect x="0" y="0" width="2" height="2" fill="#7a2810"/><rect x="0" y="3" width="2" height="2" fill="#7a2810"/><rect x="0" y="6" width="2" height="2" fill="#7a2810"/>
<rect x="3" y="1" width="9" height="1" fill="#cf5a36"/><rect x="3" y="4" width="9" height="1" fill="#cf5a36"/><rect x="3" y="7" width="9" height="1" fill="#cf5a36"/>
</svg>
<div class="" style="position:absolute;left:1219px;top:196px;width:22px;height:25px;border:1px solid #adadad;box-sizing:border-box;background:#e1e1e1;"></div><svg style="left:1224px;top:202px" width="12" height="12" viewBox="0 0 12 12">
<defs><linearGradient id="pg" x1="0" y1="0" x2="0" y2="1"><stop offset="0" stop-color="#e3e85a"/><stop offset="0.5" stop-color="#c4d63c"/><stop offset="1" stop-color="#7db83c"/></linearGradient></defs>
<path d="M4.5 0.5 H7.5 V4.5 H11.5 V7.5 H7.5 V11.5 H4.5 V7.5 H0.5 V4.5 H4.5 Z" fill="url(#pg)" stroke="#3f9155" stroke-width="1"/>
</svg>
<div class="abs" style="left:676px;top:231px;width:13px;height:13px;border:1px solid #333;box-sizing:border-box;background:#fff;"></div><svg style="left:676px;top:231px" width="13" height="13" viewBox="0 0 13 13"><path d="M2.6 6.4 L5.3 9.2 L10.4 3.6" fill="none" stroke="#333" stroke-width="1.5"/></svg><div class="" style="position:absolute;left:694px;top:235px;width:481px;height:202px;border:1px solid #dcdcdc;box-sizing:border-box;"></div><div class="" style="position:absolute;left:701px;top:233px;width:123.0px;height:5px;background:#fff;"></div>
<span id="t43" class="t " style="left:703.4px;top:227.5px;letter-spacing:0.308px;">PduRDestBufferRef</span>
<svg style="left:815.3px;top:226.8px" width="7.4" height="10.2" viewBox="0 0 8 11">
<defs><radialGradient id="bl" cx="0.4" cy="0.35" r="0.7"><stop offset="0" stop-color="#ffe27a"/><stop offset="0.5" stop-color="#fdc517"/><stop offset="1" stop-color="#f7a80a"/></radialGradient></defs>
<path d="M4 0.2 C6.2 0.2 7.7 1.8 7.7 3.7 C7.7 5.4 6.3 6.2 5.9 7.6 H2.1 C1.7 6.2 0.3 5.4 0.3 3.7 C0.3 1.8 1.8 0.2 4 0.2 Z" fill="url(#bl)"/>
<path d="M2.3 7.6 H5.7 V8.8 H2.3 Z" fill="#d98a1e"/>
<path d="M2.8 8.8 H5.2 L4.6 10.2 H3.4 Z" fill="#8a7a6a"/>
<path d="M2.3 2.3 L3.4 1.4" stroke="#fff6c8" stroke-width="0.9" stroke-linecap="round"/>
</svg>
<div class="" style="position:absolute;left:703px;top:250px;width:439px;height:169px;border:1px solid #6d7280;box-sizing:border-box;background:#fff;"></div><div class="" style="position:absolute;left:705px;top:272px;width:436px;height:1px;background:#eeeeee;"></div><div class="" style="position:absolute;left:705px;top:293px;width:436px;height:1px;background:#eeeeee;"></div><div class="" style="position:absolute;left:705px;top:314px;width:436px;height:1px;background:#eeeeee;"></div><div class="" style="position:absolute;left:705px;top:335px;width:436px;height:1px;background:#eeeeee;"></div><div class="" style="position:absolute;left:705px;top:356px;width:436px;height:1px;background:#eeeeee;"></div><div class="" style="position:absolute;left:705px;top:377px;width:436px;height:1px;background:#eeeeee;"></div><div class="" style="position:absolute;left:705px;top:398px;width:436px;height:1px;background:#eeeeee;"></div><div class="" style="position:absolute;left:1123px;top:252px;width:1px;height:165px;background:#e4e9f2;"></div>
<svg style="left:1147px;top:316px" width="14" height="14" viewBox="0 0 14 14">
<defs><linearGradient id="cgadd" x1="0" y1="0" x2="0" y2="1"><stop offset="0" stop-color="#8fd08a"/><stop offset="1" stop-color="#4aa548"/></linearGradient></defs>
<circle cx="7" cy="7" r="6.5" fill="url(#cgadd)" stroke="#3d9440" stroke-width="1"/>
<circle cx="7" cy="7" r="5.2" fill="none" stroke="rgba(255,255,255,0.35)" stroke-width="0.8"/>
<path d="M7 3.8 V10.2 M3.8 7 H10.2" stroke="#fff" stroke-width="2.2"/></svg>
<svg style="left:1147px;top:338px" width="14" height="14" viewBox="0 0 14 14">
<defs><linearGradient id="cgdel" x1="0" y1="0" x2="0" y2="1"><stop offset="0" stop-color="#f49a90"/><stop offset="1" stop-color="#e0463c"/></linearGradient></defs>
<circle cx="7" cy="7" r="6.5" fill="url(#cgdel)" stroke="#c8382e" stroke-width="1"/>
<circle cx="7" cy="7" r="5.2" fill="none" stroke="rgba(255,255,255,0.35)" stroke-width="0.8"/>
<path d="M3.6 7 H10.4" stroke="#fff" stroke-width="2.4"/></svg>
<span id="t44" class="t " style="right:343px;top:456px;letter-spacing:0.067px;">PduRDestPduRRef :</span>
<svg style="left:925px;top:458px" width="7.4" height="10.2" viewBox="0 0 8 11">
<defs><radialGradient id="bl" cx="0.4" cy="0.35" r="0.7"><stop offset="0" stop-color="#ffe27a"/><stop offset="0.5" stop-color="#fdc517"/><stop offset="1" stop-color="#f7a80a"/></radialGradient></defs>
<path d="M4 0.2 C6.2 0.2 7.7 1.8 7.7 3.7 C7.7 5.4 6.3 6.2 5.9 7.6 H2.1 C1.7 6.2 0.3 5.4 0.3 3.7 C0.3 1.8 1.8 0.2 4 0.2 Z" fill="url(#bl)"/>
<path d="M2.3 7.6 H5.7 V8.8 H2.3 Z" fill="#d98a1e"/>
<path d="M2.8 8.8 H5.2 L4.6 10.2 H3.4 Z" fill="#8a7a6a"/>
<path d="M2.3 2.3 L3.4 1.4" stroke="#fff6c8" stroke-width="0.9" stroke-linecap="round"/>
</svg>
<div class="" style="position:absolute;left:934px;top:451px;width:260px;height:25px;border:1px solid #adadad;box-sizing:border-box;background:#e1e1e1;"></div><svg style="left:1180.5px;top:461.6px" width="9" height="5" viewBox="0 0 9 5"><path d="M0.4 0.4 L4.5 4.4 L8.6 0.4" fill="none" stroke="#3a3a3a" stroke-width="1.15"/></svg>
<span id="t45" class="t " style="left:938.5px;top:456px;letter-spacing:-0.18px;">PduRDestPdu_DCM_PHY_RX</span>
<div class="" style="position:absolute;left:1195px;top:451px;width:22px;height:25px;border:1px solid #adadad;box-sizing:border-box;background:#e1e1e1;"></div><svg style="left:1200px;top:459px" width="13" height="9" viewBox="0 0 13 9" shape-rendering="crispEdges">
<rect x="2.5" y="0.5" width="10" height="8" fill="#e8eeee" opacity="0.6"/>
<rect x="0" y="0" width="2" height="2" fill="#7a2810"/><rect x="0" y="3" width="2" height="2" fill="#7a2810"/><rect x="0" y="6" width="2" height="2" fill="#7a2810"/>
<rect x="3" y="1" width="9" height="1" fill="#cf5a36"/><rect x="3" y="4" width="9" height="1" fill="#cf5a36"/><rect x="3" y="7" width="9" height="1" fill="#cf5a36"/>
</svg>
<div class="" style="position:absolute;left:1219px;top:451px;width:22px;height:25px;border:1px solid #adadad;box-sizing:border-box;background:#e1e1e1;"></div><svg style="left:1224px;top:457px" width="12" height="12" viewBox="0 0 12 12">
<defs><linearGradient id="pg" x1="0" y1="0" x2="0" y2="1"><stop offset="0" stop-color="#e3e85a"/><stop offset="0.5" stop-color="#c4d63c"/><stop offset="1" stop-color="#7db83c"/></linearGradient></defs>
<path d="M4.5 0.5 H7.5 V4.5 H11.5 V7.5 H7.5 V11.5 H4.5 V7.5 H0.5 V4.5 H4.5 Z" fill="url(#pg)" stroke="#3f9155" stroke-width="1"/>
</svg>
<div class="abs" style="left:791px;top:436.8px;width:333px;height:46.2px;border:4px solid #32c155;border-radius:8px;box-sizing:border-box;"></div>
<div class="abs" style="left:676px;top:486px;width:13px;height:13px;border:1px solid #333;box-sizing:border-box;background:#fff;"></div><svg style="left:676px;top:486px" width="13" height="13" viewBox="0 0 13 13"><path d="M2.6 6.4 L5.3 9.2 L10.4 3.6" fill="none" stroke="#333" stroke-width="1.5"/></svg><div class="" style="position:absolute;left:694px;top:490px;width:481px;height:202px;border:1px solid #dcdcdc;box-sizing:border-box;"></div><div class="" style="position:absolute;left:701px;top:488px;width:169.0px;height:5px;background:#fff;"></div>
<span id="t46" class="t " style="left:703.4px;top:482.5px;letter-spacing:0.361px;">PduRRoutingPathGroupRef</span>
<svg style="left:861.3px;top:481.8px" width="7.4" height="10.2" viewBox="0 0 8 11">
<defs><radialGradient id="bl" cx="0.4" cy="0.35" r="0.7"><stop offset="0" stop-color="#ffe27a"/><stop offset="0.5" stop-color="#fdc517"/><stop offset="1" stop-color="#f7a80a"/></radialGradient></defs>
<path d="M4 0.2 C6.2 0.2 7.7 1.8 7.7 3.7 C7.7 5.4 6.3 6.2 5.9 7.6 H2.1 C1.7 6.2 0.3 5.4 0.3 3.7 C0.3 1.8 1.8 0.2 4 0.2 Z" fill="url(#bl)"/>
<path d="M2.3 7.6 H5.7 V8.8 H2.3 Z" fill="#d98a1e"/>
<path d="M2.8 8.8 H5.2 L4.6 10.2 H3.4 Z" fill="#8a7a6a"/>
<path d="M2.3 2.3 L3.4 1.4" stroke="#fff6c8" stroke-width="0.9" stroke-linecap="round"/>
</svg>
<div class="" style="position:absolute;left:703px;top:505px;width:439px;height:169px;border:1px solid #6d7280;box-sizing:border-box;background:#fff;"></div><div class="" style="position:absolute;left:705px;top:527px;width:436px;height:1px;background:#eeeeee;"></div><div class="" style="position:absolute;left:705px;top:548px;width:436px;height:1px;background:#eeeeee;"></div><div class="" style="position:absolute;left:705px;top:569px;width:436px;height:1px;background:#eeeeee;"></div><div class="" style="position:absolute;left:705px;top:590px;width:436px;height:1px;background:#eeeeee;"></div><div class="" style="position:absolute;left:705px;top:611px;width:436px;height:1px;background:#eeeeee;"></div><div class="" style="position:absolute;left:705px;top:632px;width:436px;height:1px;background:#eeeeee;"></div><div class="" style="position:absolute;left:705px;top:653px;width:436px;height:1px;background:#eeeeee;"></div><div class="" style="position:absolute;left:1123px;top:507px;width:1px;height:165px;background:#e4e9f2;"></div>
<svg style="left:1147px;top:571px" width="14" height="14" viewBox="0 0 14 14">
<defs><linearGradient id="cgadd" x1="0" y1="0" x2="0" y2="1"><stop offset="0" stop-color="#8fd08a"/><stop offset="1" stop-color="#4aa548"/></linearGradient></defs>
<circle cx="7" cy="7" r="6.5" fill="url(#cgadd)" stroke="#3d9440" stroke-width="1"/>
<circle cx="7" cy="7" r="5.2" fill="none" stroke="rgba(255,255,255,0.35)" stroke-width="0.8"/>
<path d="M7 3.8 V10.2 M3.8 7 H10.2" stroke="#fff" stroke-width="2.2"/></svg>
<svg style="left:1147px;top:593px" width="14" height="14" viewBox="0 0 14 14">
<defs><linearGradient id="cgdel" x1="0" y1="0" x2="0" y2="1"><stop offset="0" stop-color="#f49a90"/><stop offset="1" stop-color="#e0463c"/></linearGradient></defs>
<circle cx="7" cy="7" r="6.5" fill="url(#cgdel)" stroke="#c8382e" stroke-width="1"/>
<circle cx="7" cy="7" r="5.2" fill="none" stroke="rgba(255,255,255,0.35)" stroke-width="0.8"/>
<path d="M3.6 7 H10.4" stroke="#fff" stroke-width="2.4"/></svg>
<span id="t47" class="t " style="right:343px;top:711.7px;letter-spacing:0.038px;">PduRSrcPduRRef :</span>
<svg style="left:925px;top:714px" width="7.4" height="10.2" viewBox="0 0 8 11">
<defs><radialGradient id="bl" cx="0.4" cy="0.35" r="0.7"><stop offset="0" stop-color="#ffe27a"/><stop offset="0.5" stop-color="#fdc517"/><stop offset="1" stop-color="#f7a80a"/></radialGradient></defs>
<path d="M4 0.2 C6.2 0.2 7.7 1.8 7.7 3.7 C7.7 5.4 6.3 6.2 5.9 7.6 H2.1 C1.7 6.2 0.3 5.4 0.3 3.7 C0.3 1.8 1.8 0.2 4 0.2 Z" fill="url(#bl)"/>
<path d="M2.3 7.6 H5.7 V8.8 H2.3 Z" fill="#d98a1e"/>
<path d="M2.8 8.8 H5.2 L4.6 10.2 H3.4 Z" fill="#8a7a6a"/>
<path d="M2.3 2.3 L3.4 1.4" stroke="#fff6c8" stroke-width="0.9" stroke-linecap="round"/>
</svg>
<div class="" style="position:absolute;left:934px;top:707px;width:260px;height:25px;border:1px solid #adadad;box-sizing:border-box;background:#e1e1e1;"></div><svg style="left:1180.5px;top:717.6px" width="9" height="5" viewBox="0 0 9 5"><path d="M0.4 0.4 L4.5 4.4 L8.6 0.4" fill="none" stroke="#3a3a3a" stroke-width="1.15"/></svg>
<span id="t48" class="t " style="left:938.5px;top:711.7px;letter-spacing:-0.27px;">PduRSrcPdu_DCM_PHY_RX</span>
<div class="" style="position:absolute;left:1195px;top:707px;width:22px;height:25px;border:1px solid #adadad;box-sizing:border-box;background:#e1e1e1;"></div><svg style="left:1200px;top:715px" width="13" height="9" viewBox="0 0 13 9" shape-rendering="crispEdges">
<rect x="2.5" y="0.5" width="10" height="8" fill="#e8eeee" opacity="0.6"/>
<rect x="0" y="0" width="2" height="2" fill="#7a2810"/><rect x="0" y="3" width="2" height="2" fill="#7a2810"/><rect x="0" y="6" width="2" height="2" fill="#7a2810"/>
<rect x="3" y="1" width="9" height="1" fill="#cf5a36"/><rect x="3" y="4" width="9" height="1" fill="#cf5a36"/><rect x="3" y="7" width="9" height="1" fill="#cf5a36"/>
</svg>
<div class="" style="position:absolute;left:1219px;top:707px;width:22px;height:25px;border:1px solid #adadad;box-sizing:border-box;background:#e1e1e1;"></div><svg style="left:1224px;top:713px" width="12" height="12" viewBox="0 0 12 12">
<defs><linearGradient id="pg" x1="0" y1="0" x2="0" y2="1"><stop offset="0" stop-color="#e3e85a"/><stop offset="0.5" stop-color="#c4d63c"/><stop offset="1" stop-color="#7db83c"/></linearGradient></defs>
<path d="M4.5 0.5 H7.5 V4.5 H11.5 V7.5 H7.5 V11.5 H4.5 V7.5 H0.5 V4.5 H4.5 Z" fill="url(#pg)" stroke="#3f9155" stroke-width="1"/>
</svg>
<div class="abs" style="left:804px;top:691.8px;width:399.7px;height:54px;border:4px solid #e83a22;border-radius:8px;box-sizing:border-box;"></div>
<div class="" style="position:absolute;left:0px;top:781px;width:1263px;height:106px;background:#f0f0f0;"></div>
<div class="" style="position:absolute;left:3px;top:756px;width:1260px;height:1px;background:#9e9e9e;"></div>
<div class="" style="position:absolute;left:3px;top:757px;width:1260px;height:21px;background:#f0f0f0;"></div>
<div class="" style="position:absolute;left:0px;top:780px;width:1263px;height:1px;background:#a0a0a0;"></div>
<div class="abs" style="left:198px;top:756px;width:114px;height:22px;border:1px solid #a0a0a0;border-top:none;border-radius:0 0 5px 5px;box-sizing:border-box;background:#f0f0f0;"></div>
<div class="" style="position:absolute;left:86px;top:757px;width:1px;height:21px;background:#a0a0a0;"></div>
<div class="" style="position:absolute;left:492px;top:757px;width:1px;height:21px;background:#a0a0a0;"></div>
<span id="t49" class="t " style="left:7.4px;top:758.7px;letter-spacing:0.144px;">PduRGeneral</span>
<span id="t50" class="t " style="left:90.6px;top:758.7px;letter-spacing:0.347px;">PduRBswModules</span>
<span id="t51" class="t " style="left:202.5px;top:758.7px;letter-spacing:0.183px;">PduRRoutingPaths</span>
<span id="t52" class="t " style="left:316.2px;top:758.7px;letter-spacing:0.231px;">PduRDemEventParameterRefs</span>
<div class="abs" style="left:0px;top:785px;width:332px;height:110px;border:1px solid #a0a0a0;border-radius:3px 4px 0 0;box-sizing:border-box;background:#f0f0f0;"></div>
<div class="abs" style="left:156px;top:786px;width:175px;height:23px;border-left:1px solid #a0a0a0;border-bottom:1px solid #a0a0a0;border-radius:0 4px 0 0;box-sizing:border-box;background:#f3f3f3;"></div>
<svg style="left:4px;top:788px" width="17" height="17" viewBox="0 0 17 17">
<ellipse cx="8" cy="9.9" rx="8" ry="5.6" fill="none" stroke="#f55050" stroke-width="0.9" stroke-dasharray="1.6 0.7" transform="rotate(-12 8 9.9)"/>
<path d="M4.6 10 C5 12.6 9.4 12.8 12 9.6" fill="none" stroke="#f00a0a" stroke-width="2.4" stroke-linecap="round"/>
<path d="M10.4 1.2 L15.6 9.4 H5.4 Z" fill="#ffd21e" stroke="#e0a62a" stroke-width="0.8" stroke-linejoin="round"/>
<path d="M10.4 2.4 L12.4 5.6 H8.4 Z" fill="#fff0a0"/>
<path d="M10.4 3.8 V7 M10.4 7.8 V8.9" stroke="#111" stroke-width="1.2"/>
</svg>
<span id="t53" class="t " style="left:24.2px;top:789.6px;letter-spacing:0.571px;">Autosar Validation</span>
<svg style="left:138.8px;top:791.6px" width="10.4" height="10.2" viewBox="0 0 11 11"><path d="M0.7 0.7 H3 L5.5 3.6 L8 0.7 H10.3 V2.2 L7.4 5.5 L10.3 8.8 V10.3 H8 L5.5 7.4 L3 10.3 H0.7 V8.8 L3.6 5.5 L0.7 2.2 Z" fill="#f8f8f8" stroke="#6a6a6a" stroke-width="0.9"/></svg>
<div class="" style="position:absolute;left:288px;top:791px;width:10px;height:4px;border:1px solid #6a6a6a;box-sizing:border-box;background:#fdfdfd;"></div>
<div class="" style="position:absolute;left:311px;top:791px;width:10px;height:10px;border:1px solid #6a6a6a;border-top-width:2px;box-sizing:border-box;background:#fdfdfd;"></div>
<svg style="left:314px;top:817px" width="11" height="6" viewBox="0 0 11 6"><path d="M0.8 0.5 H10.2 L5.5 5.4 Z" fill="#fbfbfb" stroke="#6a6a6a" stroke-width="0.9"/></svg>
<span id="t54" class="t " style="left:193.3px;top:817px;letter-spacing:0.258px;">Configure Filters...</span>
<div class="abs" style="left:2px;top:830px;width:328px;height:22px;overflow:hidden;"><span id="t55" class="t " style="left:1.3px;top:6.8px;letter-spacing:0.509px;">0 errors, 0 warnings, 0 infos (Filter matched 0 of 75 items)</span></div>
<div class="" style="position:absolute;left:2px;top:853px;width:327px;height:1px;background:#a0a0a0;"></div>
<div class="" style="position:absolute;left:2px;top:854px;width:327px;height:25px;background:#ffffff;"></div>
<div class="" style="position:absolute;left:2px;top:879px;width:254px;height:8px;background:#f5f5f5;"></div>
<div class="" style="position:absolute;left:257px;top:879px;width:72px;height:8px;background:#ffffff;"></div>
<div class="" style="position:absolute;left:256px;top:854px;width:1px;height:33px;background:#e0e0e0;"></div>
<svg style="left:126px;top:855px" width="9" height="5" viewBox="0 0 9 5"><path d="M0.5 4.5 L4.5 0.6 L8.5 4.5" fill="none" stroke="#707070" stroke-width="1"/></svg>
<span id="t56" class="t " style="left:9px;top:858.7px;letter-spacing:0.543px;">Description</span>
<span id="t57" class="t " style="left:263.5px;top:858.7px;letter-spacing:0.385px;">Object</span>
<div class="abs" style="left:336px;top:785px;width:940px;height:110px;border:1px solid #a0a0a0;border-radius:3px 0 0 0;box-sizing:border-box;background:#ffffff;"></div>
<div class="" style="position:absolute;left:337px;top:786px;width:926px;height:25px;background:#f0f0f0;border-radius:2px 0 0 0;"></div>
<div class="" style="position:absolute;left:419px;top:786px;width:844px;height:22px;background:#f3f3f3;"></div>
<div class="" style="position:absolute;left:418px;top:808px;width:845px;height:1px;background:#a0a0a0;"></div>
<div class="" style="position:absolute;left:418px;top:786px;width:1px;height:22px;background:#a0a0a0;"></div>
<div class="" style="position:absolute;left:493px;top:786px;width:1px;height:22px;background:#a0a0a0;"></div>
<div class="" style="position:absolute;left:562px;top:786px;width:1px;height:22px;background:#a0a0a0;"></div>
<div class="" style="position:absolute;left:645px;top:786px;width:1px;height:22px;background:#a0a0a0;"></div>
<svg style="left:341px;top:789px" width="17" height="16" viewBox="0 0 17 16">
<rect x="0.6" y="0.6" width="13.2" height="14.8" rx="1.6" fill="#fbfbfb" stroke="#bcbcbc" stroke-width="1"/>
<g transform="translate(3 12.9) rotate(-42.5)">
<path d="M0 0 L3 -2 V2 Z" fill="#f4c79c" stroke="#c98a3a" stroke-width="0.5"/>
<path d="M0 0 L1.1 -0.75 V0.75 Z" fill="#6a3c0a"/>
<rect x="3" y="-2" width="8.4" height="4" fill="#f3d648" stroke="#d9962a" stroke-width="0.6"/>
<path d="M3.2 -0.7 H11.2" stroke="#fff4b0" stroke-width="0.9" stroke-dasharray="1 0.5"/>
<path d="M3.2 1.2 H11.2" stroke="#e3a726" stroke-width="0.9"/>
<rect x="11.4" y="-2" width="1.2" height="4" fill="#e0993a"/>
<path d="M12.6 -2 H14.2 Q15.4 -2 15.4 0 Q15.4 2 14.2 2 H12.6 Z" fill="#f9cfae" stroke="#dc9a52" stroke-width="0.6"/>
</g>
</svg>
<span id="t58" class="t " style="left:360.5px;top:789.7px;letter-spacing:0.185px;">Detail</span>
<svg style="left:400.8px;top:791.6px" width="10.4" height="10.2" viewBox="0 0 11 11"><path d="M0.7 0.7 H3 L5.5 3.6 L8 0.7 H10.3 V2.2 L7.4 5.5 L10.3 8.8 V10.3 H8 L5.5 7.4 L3 10.3 H0.7 V8.8 L3.6 5.5 L0.7 2.2 Z" fill="#f8f8f8" stroke="#6a6a6a" stroke-width="0.9"/></svg>
<svg style="left:425px;top:790px" width="14" height="14" viewBox="0 0 14 14">
<rect x="0.9" y="0.9" width="12.2" height="9.4" rx="1.6" fill="#f4f8ff" stroke="#2a56a6" stroke-width="1.8"/>
<path d="M3.4 4 H9.6 M3.4 6.4 H7.6" stroke="#3a5fb0" stroke-width="1.1"/>
<path d="M5 10.8 H9 V12 H5 Z" fill="#2a56a6"/><path d="M2.6 12.7 H11.4" stroke="#3d6cc0" stroke-width="1.5"/>
</svg>
<span id="t59" class="t " style="left:443px;top:789.7px;letter-spacing:0.41px;">Console</span>
<svg style="left:499px;top:790.4px" width="13" height="14" viewBox="0 0 13 14">
<defs><linearGradient id="ol" x1="0" y1="0" x2="1" y2="1"><stop offset="0" stop-color="#9cc6f4"/><stop offset="1" stop-color="#3f86d8"/></linearGradient></defs>
<rect x="0.5" y="0.5" width="4.6" height="4.6" fill="url(#ol)" stroke="#2c62b4" stroke-width="1"/>
<rect x="0.5" y="8.5" width="4.6" height="4.6" fill="url(#ol)" stroke="#2c62b4" stroke-width="1"/>
<path d="M7.4 2.8 H12.8 M10.4 7 H12.8 M7.4 11 H12.8" stroke="#3a70c4" stroke-width="1.1"/>
<rect x="7.4" y="6" width="2" height="2" fill="#dbe9fb" stroke="#3a70c4" stroke-width="0.7"/>
</svg>
<span id="t60" class="t " style="left:518.4px;top:789.7px;letter-spacing:0.31px;">Outline</span>
<svg style="left:567.5px;top:789.6px" width="14" height="14" viewBox="0 0 14 14">
<rect x="0.5" y="0.5" width="8" height="12.8" fill="#f3efe6" stroke="#b9b4a6" stroke-width="1"/>
<path d="M8.5 0.6 H12.6 C11.6 4.6 13.6 9 13 13.2 H8.5 Z" fill="#fdfdfd" stroke="#a9adba" stroke-width="0.9"/>
<path d="M0.6 6.6 H8.4" stroke="#c8c4b8" stroke-width="0.8"/>
<circle cx="4.4" cy="3.6" r="2.3" fill="#e8242c"/>
<path d="M4.4 7.8 L7 10.6 V12.6 H1.8 V10.6 Z" fill="#ffb420" stroke="#e59010" stroke-width="0.5"/>
</svg>
<span id="t61" class="t " style="left:587.1px;top:789.7px;letter-spacing:0.489px;">Problems</span>
<span id="t62" class="t serif" style="left:347.1px;top:817.7px;font-weight:bold;font-size:17.3px;line-height:24px;height:24px;transform:scaleX(1.077);transform-origin:0 0;">PduRRoutingPath</span>
<span id="t63" class="t serif" style="left:347.1px;top:859.3px;letter-spacing:0.004px;font-size:16px;line-height:20px;height:20px;">This container is a subcontainer of PduRRoutingTable and specifies the routing path of a PDU.</span>
</body></html>
